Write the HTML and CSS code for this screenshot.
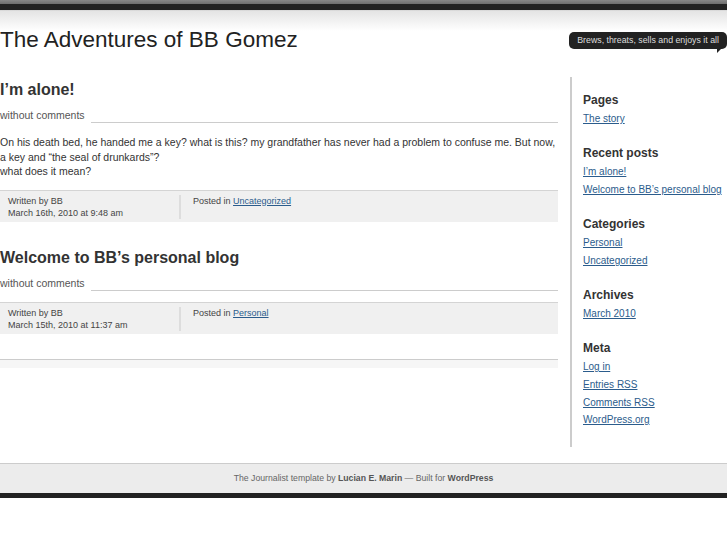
FILE: index.html
```html
<!DOCTYPE html>
<html lang="en">
<head>
<meta charset="utf-8">
<title>The Adventures of BB Gomez</title>
<link rel="stylesheet" href="styles.css">
</head>
<body>
<div class="topbar"></div>
<header class="masthead">
  <h1 class="site-title">The Adventures of BB Gomez</h1>
  <div class="tagline">Brews, threats, sells and enjoys it all</div>
</header>
<div class="page">
  <main class="content">
    <article class="post">
      <h2 class="post-title">I’m alone!</h2>
      <div class="comments-row"><span class="comments">without comments</span><span class="rule"></span></div>
      <p class="entry">On his death bed, he handed me a key? what is this? my grandfather has never had a problem to confuse me. But now, a key and “the seal of drunkards”?<br>what does it mean?</p>
      <div class="meta">
        <div class="meta-author">Written by BB<br>March 16th, 2010 at 9:48 am</div>
        <div class="meta-cat">Posted in <a href="#">Uncategorized</a></div>
      </div>
    </article>
    <article class="post">
      <h2 class="post-title">Welcome to BB’s personal blog</h2>
      <div class="comments-row"><span class="comments">without comments</span><span class="rule"></span></div>
      <div class="meta">
        <div class="meta-author">Written by BB<br>March 15th, 2010 at 11:37 am</div>
        <div class="meta-cat">Posted in <a href="#">Personal</a></div>
      </div>
    </article>
    <div class="navigation"></div>
  </main>
  <aside class="sidebar">
    <section class="widget">
      <h3>Pages</h3>
      <ul><li><a href="#">The story</a></li></ul>
    </section>
    <section class="widget">
      <h3>Recent posts</h3>
      <ul><li><a href="#">I’m alone!</a></li><li><a href="#">Welcome to BB’s personal blog</a></li></ul>
    </section>
    <section class="widget">
      <h3>Categories</h3>
      <ul><li><a href="#">Personal</a></li><li><a href="#">Uncategorized</a></li></ul>
    </section>
    <section class="widget">
      <h3>Archives</h3>
      <ul><li><a href="#">March 2010</a></li></ul>
    </section>
    <section class="widget">
      <h3>Meta</h3>
      <ul><li><a href="#">Log in</a></li><li><a href="#">Entries RSS</a></li><li><a href="#">Comments RSS</a></li><li><a href="#">WordPress.org</a></li></ul>
    </section>
  </aside>
</div>
<footer class="footer">The Journalist template by <b>Lucian E. Marin</b> — Built for <b>WordPress</b></footer>
</body>
</html>
```
FILE: styles.css
```css
html, body {
  margin: 0;
  padding: 0;
  background: #fff;
}
body {
  width: 727px;
  overflow: hidden;
  font-family: "Liberation Sans", Arial, sans-serif;
  color: #333;
}
a { color: #2b5c8c; }

.topbar {
  height: 4px;
  background: linear-gradient(#888, #6e6e6e);
  border-bottom: 6px solid #222;
}

.masthead {
  display: flex;
  justify-content: space-between;
  align-items: flex-start;
  height: 67px;
  background: linear-gradient(to bottom, #cfcfcf 0, #e4e4e4 1px, #fff 21px, #fff 100%);
}
.site-title {
  margin: 17px 0 0 0;
  font-size: 22.5px;
  line-height: 26px;
  font-weight: normal;
  color: #222;
}
.tagline {
  position: relative;
  margin-top: 22px;
  height: 17px;
  line-height: 17px;
  padding: 0 8px;
  background: #222;
  color: #ddd;
  font-size: 8.8px;
  border-radius: 5px;
  white-space: nowrap;
}
.tagline::after {
  content: "";
  position: absolute;
  right: 6px;
  top: 100%;
  border-top: 4px solid #222;
  border-right: 4px solid transparent;
}

.page {
  display: flex;
  align-items: flex-start;
}
.content {
  width: 558px;
  flex: none;
  padding-top: 3px;
}
.post { margin-bottom: 26px; }
.post:last-of-type { margin-bottom: 25px; }
.post-title {
  margin: 0 0 9px;
  font-size: 16px;
  line-height: 20px;
  font-weight: bold;
  color: #333;
}
.comments-row {
  display: flex;
  align-items: flex-end;
  height: 14px;
}
.comments {
  margin-bottom: 1px;
  font-size: 10.5px;
  line-height: 14px;
  color: #555;
}
.rule {
  flex: 1;
  margin-left: 6px;
  border-bottom: 1px solid #ccc;
}
.entry {
  margin: 12px 0 0;
  font-size: 10.5px;
  line-height: 14.5px;
  color: #333;
}
.meta {
  display: flex;
  margin-top: 11px;
  padding: 4px 0 3px 8px;
  border-top: 1px solid #d4d4d4;
  background: #f0f0f0;
  font-size: 9px;
  line-height: 12px;
  color: #444;
}
.meta-author {
  width: 171px;
  border-right: 2px solid #ddd;
}
.meta-cat { padding-left: 12px; }

.navigation {
  height: 8px;
  border-top: 1px solid #ccc;
  background: #f6f6f6;
}

.sidebar {
  flex: 1;
  margin-left: 12px;
  padding: 15px 0 18px 11px;
  border-left: 2px solid #ccc;
}
.widget { margin-bottom: 17.5px; }
.widget:last-child { margin-bottom: 0; }
.widget h3 {
  margin: 0 0 2px;
  font-size: 12px;
  line-height: 16px;
  font-weight: bold;
  color: #333;
}
.widget ul {
  list-style: none;
  margin: 0;
  padding: 0;
}
.widget li {
  font-size: 10px;
  line-height: 17.7px;
  white-space: nowrap;
}

.footer {
  margin-top: 16px;
  height: 29px;
  line-height: 29px;
  border-top: 1px solid #ccc;
  border-bottom: 5px solid #222;
  background: #ececec;
  text-align: center;
  font-size: 8.7px;
  color: #666;
}
.footer b { color: #555; }
```
